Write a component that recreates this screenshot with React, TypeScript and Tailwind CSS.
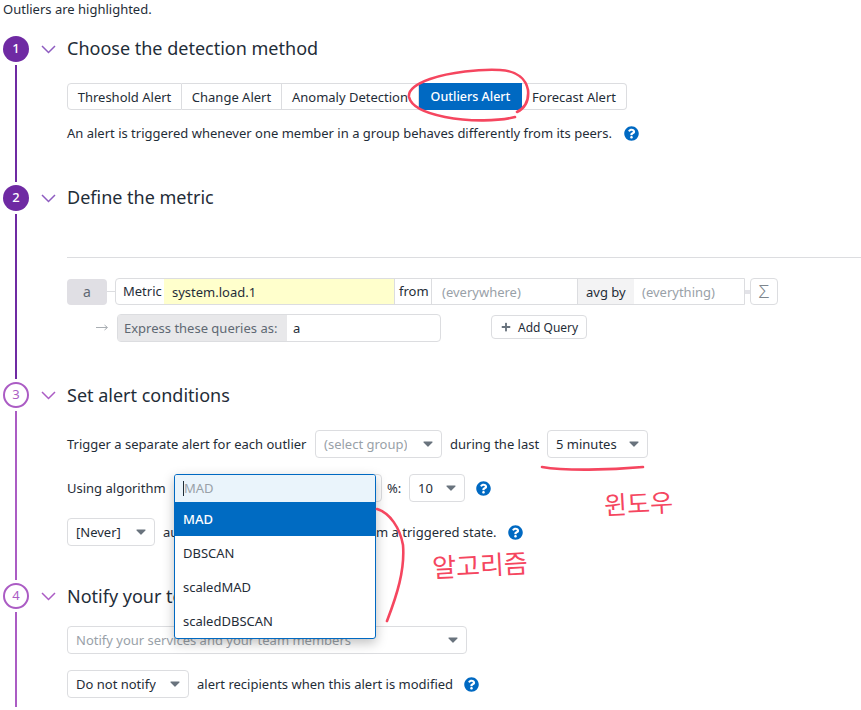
import React from 'react';
import { FaQuestionCircle, FaPlus } from 'react-icons/fa';

function Help({ className = '' }: { className?: string }) {
  return <FaQuestionCircle size={15} className={`text-[#0069c2] shrink-0 ${className}`} />;
}

function Caret() {
  return (
    <svg width="10" height="6" viewBox="0 0 10 6" className="shrink-0">
      <path d="M1 0.5h8a.6.6 0 0 1 .45 1L5.4 5.5a.6.6 0 0 1-.85 0L.55 1.5A.6.6 0 0 1 1 .5z" fill="#69737d" />
    </svg>
  );
}

function Select({ label, width, muted }: { label: string; width: string; muted?: boolean }) {
  return (
    <div className={`${width} h-[28px] shrink-0 flex items-center justify-between pl-[8px] pr-[8px] border border-[#dcdde0] rounded-[4px] bg-white`}>
      <span className={`mt-[2px] truncate ${muted ? 'text-[#99a1a8]' : ''}`}>{label}</span>
      <Caret />
    </div>
  );
}

function Step({ n, title, filled, height, children }: { n: number; title: string; filled: boolean; height: string; children: React.ReactNode }) {
  return (
    <div className={`flex ${height}`}>
      <div className="w-[38px] pl-[3px] flex flex-col shrink-0">
        <div className={`w-[26px] h-[26px] rounded-full flex items-center justify-center text-[13px] shrink-0 ${filled ? 'bg-[#6f2aa3] text-white font-medium' : 'border-2 border-[#ab5cc4] text-[#ab5cc4]'}`}>
          {n}
        </div>
        <div className={`w-[2px] ml-[12px] mt-[3px] mb-[3px] grow ${filled ? 'bg-[#6f2aa3]' : 'bg-[#ab5cc4]'}`} />
      </div>
      <div className="w-[29px] shrink-0 pl-[3px] pt-[9px]">
        <svg width="15" height="9" viewBox="0 0 15 9" fill="none" stroke={filled ? '#8e5cc0' : '#ab5cc4'} strokeWidth="1.5">
          <path d="M1 1l6.5 6.5L14 1" />
        </svg>
      </div>
      <div className="grow min-w-0">
        <h2 className={`h-[26px] text-[18px] text-[#1f2d38] ${filled ? 'leading-[24px]' : 'leading-[26px]'}`}>{title}</h2>
        {children}
      </div>
    </div>
  );
}

const TABS = [
  { label: 'Threshold Alert', width: 'w-[115px]' },
  { label: 'Change Alert', width: 'w-[100px]' },
  { label: 'Anomaly Detection', width: 'w-[137px]' },
  { label: 'Outliers Alert', width: 'w-[103px]', active: true },
  { label: 'Forecast Alert', width: 'w-[105px]' },
];

const ALGORITHMS = ['DBSCAN', 'scaledMAD', 'scaledDBSCAN'];

export default function App() {
  return (
    <div className="relative w-[861px] h-[710px] overflow-hidden bg-white text-[13px] text-[#1f2d38] font-['Noto_Sans',sans-serif]">
      <p className="h-[36px] pl-[3px] leading-[18px]">Outliers are highlighted.</p>

      <Step n={1} title="Choose the detection method" filled height="h-[149px]">
        <div className="mt-[21px] flex w-[560px] h-[27px]">
          {TABS.map((t, i) => (
            <div
              key={t.label}
              className={`${t.width} pt-[2px] flex items-center justify-center ${t.active ? 'bg-[#0069c2] text-white font-medium text-[12.5px]' : 'border-y border-r border-[#dcdde0]'} ${i === 0 ? 'border-l rounded-l-[4px]' : ''} ${i === TABS.length - 1 ? 'rounded-r-[4px]' : ''}`}
            >
              {t.label}
            </div>
          ))}
        </div>
        <div className="mt-[14px] h-[18px] flex items-center">
          <span className="mt-[2px]">An alert is triggered whenever one member in a group behaves differently from its peers.</span>
          <Help className="ml-[12px]" />
        </div>
      </Step>

      <Step n={2} title="Define the metric" filled height="h-[197px]">
        <div className="mt-[46px] h-px bg-[#dcdde0]" />
        <div className="mt-[20px] flex items-center h-[27px]">
          <div className="w-[40px] h-[26px] rounded-[4px] bg-[#e0dfe4] text-[#5f6973] text-[14px] flex items-center justify-center">a</div>
          <div className="w-[8px] h-px bg-[#dcdde0]" />
          <div className="w-[630px] h-[27px] flex border border-[#dcdde0] rounded-l-[4px]">
            <div className="w-[48px] flex items-center pl-[7px]">Metric</div>
            <div className="w-[230px] bg-[#ffffcc] pt-[2px] flex items-center pl-[8px]">system.load.1</div>
            <div className="w-[38px] border-x border-[#dcdde0] flex items-center pl-[4px]">from</div>
            <div className="w-[145px] pt-[2px] flex items-center pl-[10px] text-[#99a1a8]">(everywhere)</div>
            <div className="w-[57px] bg-[#f3f3f4] pt-[2px] border-l border-[#dcdde0] flex items-center pl-[8px]">avg by</div>
            <div className="grow pt-[2px] flex items-center pl-[8px] text-[#99a1a8]">(everything)</div>
          </div>
          <div className="w-[5px] h-[4px] bg-[#e3e3e8]" />
          <div className="w-[28px] h-[27px] border border-[#dcdde0] rounded-[4px] flex items-center justify-center text-[#7d858c] text-[19px] font-light">Σ</div>
        </div>
        <div className="mt-[9px] flex items-start">
          <svg width="50" height="28" viewBox="0 0 50 28" fill="none" stroke="#a9aeb3" strokeWidth="1" className="shrink-0">
            <path d="M29 13.5h11M37.5 11l3 2.5-3 2.5" />
          </svg>
          <div className="w-[324px] h-[28px] flex border border-[#dcdde0] rounded-[4px]">
            <div className="w-[169px] bg-[#e8e8ea] text-[#5f6973] pt-[2px] flex items-center pl-[6px]">Express these queries as:</div>
            <div className="grow pt-[2px] flex items-center pl-[6px]">a</div>
          </div>
          <div className="ml-[50px] mt-px w-[96px] h-[24px] border border-[#dcdde0] rounded-[4px] flex items-center pl-[9px] gap-[7px]">
            <FaPlus size={10} className="text-[#69737d]" />
            <span className="text-[12px] mt-[2px]">Add Query</span>
          </div>
        </div>
      </Step>

      <Step n={3} title="Set alert conditions" filled={false} height="h-[201px]">
        <div className="mt-[22px] flex items-center">
          <span className="w-[248px] mt-[2px] shrink-0">Trigger a separate alert for each outlier</span>
          <Select label="(select group)" width="w-[127px]" muted />
          <span className="w-[105px] mt-[2px] pl-[8px] shrink-0">during the last</span>
          <Select label="5 minutes" width="w-[101px]" />
        </div>
        <div className="mt-[16px] flex items-center">
          <span className="w-[107px] mt-[2px] shrink-0">Using algorithm</span>
          <Select label="MAD" width="w-[208px]" />
          <span className="w-[27px] mt-[2px] pl-[5px] shrink-0">%:</span>
          <Select label="10" width="w-[56px]" />
          <Help className="ml-[11px]" />
        </div>
        <div className="mt-[16px] flex items-center">
          <Select label="[Never]" width="w-[88px]" />
          <span className="ml-[8px] mt-[2px] whitespace-nowrap">automatically resolve this event from a triggered state.</span>
          <Help className="ml-[11px]" />
        </div>
      </Step>

      <Step n={4} title="Notify your team" filled={false} height="h-[127px]">
        <div className="mt-[17px]">
          <Select label="Notify your services and your team members" width="w-[400px]" muted />
        </div>
        <div className="mt-[16px] flex items-center">
          <Select label="Do not notify" width="w-[122px]" />
          <span className="ml-[8px] mt-[2px]">alert recipients when this alert is modified</span>
          <Help className="ml-[11px]" />
        </div>
      </Step>

      {/* open algorithm dropdown */}
      <div className="absolute left-[174px] top-[474px] w-[202px] h-[165px] bg-white border border-[#0069c2] rounded-[3px] shadow-[0_4px_12px_rgba(0,0,0,0.25)] overflow-hidden">
        <div className="h-[27px] bg-[#eaf4fb] flex items-center pl-[8px] text-[#99a1a8]">
          <span className="w-px h-[15px] bg-[#1f2d38]" />
          <span>MAD</span>
        </div>
        <div className="h-[34px] bg-[#006bc2] text-white font-medium pt-[2px] flex items-center pl-[8px]">MAD</div>
        {ALGORITHMS.map((a) => (
          <div key={a} className="h-[34px] pt-[2px] flex items-center pl-[8px]">{a}</div>
        ))}
      </div>

      {/* red pen annotations */}
      <svg width="861" height="710" viewBox="0 0 861 710" fill="none" stroke="#f5465f" strokeWidth="2.6" strokeLinecap="round" className="absolute left-0 top-0 pointer-events-none">
        <path d="M515 117C500 121 470 122 445 117C425 113 411 106 409 97C408 90 416 84 430 79C450 72 480 69 500 70C518 71 526 80 528 90C529 100 525 108 517 112" />
        <path d="M542 467C565 471 610 470 643 467" />
        <path d="M377 509C390 513 400 528 403 545C405 570 397 595 387 621" />
      </svg>
      <span className="absolute left-[432px] top-[546px] text-[26px] leading-[36px] text-[#f5465f] font-['Noto_Sans_CJK_KR',sans-serif] -rotate-3 whitespace-nowrap">알고리즘</span>
      <span className="absolute left-[604px] top-[485px] text-[25px] leading-[34px] text-[#f5465f] font-['Noto_Sans_CJK_KR',sans-serif] -rotate-3 whitespace-nowrap">윈도우</span>
    </div>
  );
}
